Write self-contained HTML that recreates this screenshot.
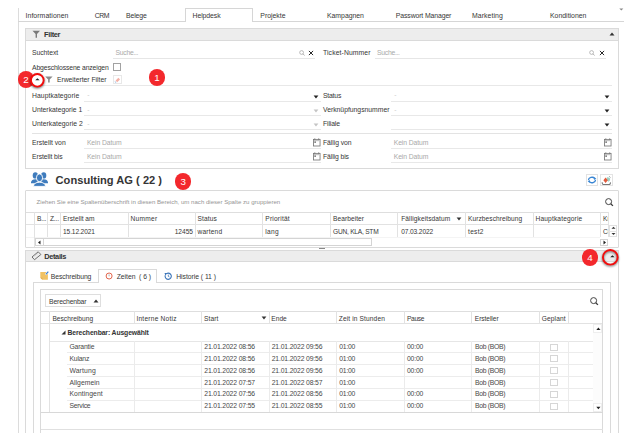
<!DOCTYPE html>
<html><head><meta charset="utf-8"><style>
html,body{margin:0;padding:0;}
body{width:642px;height:441px;position:relative;overflow:hidden;background:#fff;font-family:"Liberation Sans",sans-serif;}
body>div{position:absolute;}
.t{white-space:nowrap;}
</style></head><body>
<div style="left:18px;top:8px;width:1px;height:425px;background:#dcdcdc"></div>
<div style="left:18px;top:21px;width:606px;height:1px;background:#d6d6d6"></div>
<div style="left:185px;top:8px;width:68px;height:14px;background:#fff;border:1px solid #d6d6d6;border-bottom:none;box-sizing:border-box"></div>
<div class="t" style="left:25.5px;top:12.76px;font-size:6.9px;line-height:6.9px;color:#363636;font-weight:400;letter-spacing:0.067px;">Informationen</div>
<div class="t" style="left:94.8px;top:12.76px;font-size:6.9px;line-height:6.9px;color:#363636;font-weight:400;letter-spacing:-0.507px;">CRM</div>
<div class="t" style="left:126px;top:12.76px;font-size:6.9px;line-height:6.9px;color:#363636;font-weight:400;letter-spacing:-0.137px;">Belege</div>
<div class="t" style="left:192.5px;top:12.76px;font-size:6.9px;line-height:6.9px;color:#363636;font-weight:400;letter-spacing:-0.081px;">Helpdesk</div>
<div class="t" style="left:260.3px;top:12.76px;font-size:6.9px;line-height:6.9px;color:#363636;font-weight:400;letter-spacing:-0.016px;">Projekte</div>
<div class="t" style="left:327px;top:12.76px;font-size:6.9px;line-height:6.9px;color:#363636;font-weight:400;letter-spacing:-0.027px;">Kampagnen</div>
<div class="t" style="left:395.8px;top:12.76px;font-size:6.9px;line-height:6.9px;color:#363636;font-weight:400;letter-spacing:-0.122px;">Passwort Manager</div>
<div class="t" style="left:472px;top:12.76px;font-size:6.9px;line-height:6.9px;color:#363636;font-weight:400;letter-spacing:0.063px;">Marketing</div>
<div class="t" style="left:550px;top:12.76px;font-size:6.9px;line-height:6.9px;color:#363636;font-weight:400;letter-spacing:0.005px;">Konditionen</div>
<svg style="position:absolute;left:619px;top:7.5px;" width="5" height="3" viewBox="0 0 5 3"><path d="M0.3 0.4 L4.3 0.4 L2.3 2.4Z" fill="#888"/></svg>
<div style="left:25px;top:28px;width:594px;height:141px;border:1px solid #dadada;box-sizing:border-box;background:#fff"></div>
<div style="left:26px;top:29px;width:592px;height:11px;background:#ededed;border-bottom:1px solid #dadada"></div>
<svg style="position:absolute;left:32px;top:30px;" width="9" height="8" viewBox="0 0 9 8"><path d="M0.5 0.8 L8 0.8 L5 4 L5 7.8 L3.6 7.8 L3.6 4Z" fill="#7a7a7a"/></svg>
<div class="t" style="left:44px;top:31.15px;font-size:7.5px;line-height:7.5px;color:#333;font-weight:700;letter-spacing:-0.367px;">Filter</div>
<svg style="position:absolute;left:609px;top:32px;" width="6" height="4" viewBox="0 0 6 4"><path d="M0.5 3.5 L5.5 3.5 L3 0.5Z" fill="#333"/></svg>
<div class="t" style="left:32px;top:50.24px;font-size:6.8px;line-height:6.8px;color:#363636;font-weight:400;letter-spacing:-0.037px;">Suchtext</div>
<div style="left:113px;top:58px;width:202px;height:1px;background:#e6e6e6"></div>
<div class="t" style="left:115.5px;top:50.24px;font-size:6.8px;line-height:6.8px;color:#a9a9a9;font-weight:400;letter-spacing:-0.278px;">Suche...</div>
<svg style="position:absolute;left:298.8px;top:49.5px;" width="6" height="6" viewBox="0 0 6 6"><circle cx="2.6" cy="2.5" r="1.9" fill="none" stroke="#aaa" stroke-width="0.8"/><path d="M4 3.9 L5.7 5.6" stroke="#aaa" stroke-width="0.9"/></svg>
<svg style="position:absolute;left:308px;top:49.8px;" width="6" height="6" viewBox="0 0 6 6"><path d="M0.9 0.9 L5.1 5.1 M5.1 0.9 L0.9 5.1" stroke="#2a2a2a" stroke-width="1.0"/></svg>
<div class="t" style="left:323px;top:50.24px;font-size:6.8px;line-height:6.8px;color:#363636;font-weight:400;letter-spacing:0.107px;">Ticket-Nummer</div>
<div style="left:374.5px;top:58px;width:231.5px;height:1px;background:#e6e6e6"></div>
<div class="t" style="left:377px;top:50.24px;font-size:6.8px;line-height:6.8px;color:#a9a9a9;font-weight:400;letter-spacing:-0.278px;">Suche...</div>
<svg style="position:absolute;left:589px;top:49.5px;" width="6" height="6" viewBox="0 0 6 6"><circle cx="2.6" cy="2.5" r="1.9" fill="none" stroke="#aaa" stroke-width="0.8"/><path d="M4 3.9 L5.7 5.6" stroke="#aaa" stroke-width="0.9"/></svg>
<svg style="position:absolute;left:598.5px;top:49.8px;" width="6" height="6" viewBox="0 0 6 6"><path d="M0.9 0.9 L5.1 5.1 M5.1 0.9 L0.9 5.1" stroke="#2a2a2a" stroke-width="1.0"/></svg>
<div class="t" style="left:32px;top:64.64px;font-size:6.8px;line-height:6.8px;color:#363636;font-weight:400;letter-spacing:-0.118px;">Abgeschlossene anzeigen</div>
<div style="left:113px;top:63px;width:8px;height:8px;border:1px solid #a2a2a2;box-sizing:border-box;background:#fff"></div>
<svg style="position:absolute;left:44.5px;top:76px;" width="8" height="7" viewBox="0 0 8 7"><path d="M0.2 0.4 L7.6 0.4 L4.7 3.5 L4.7 6.6 L3.1 6.6 L3.1 3.5Z" fill="#8a8a8a"/></svg>
<div class="t" style="left:56.9px;top:77.24px;font-size:6.8px;line-height:6.8px;color:#363636;font-weight:400;letter-spacing:-0.016px;">Erweiterter Filter</div>
<div style="left:113px;top:75px;width:9px;height:9px;border:1px solid #e8e8e8;box-sizing:border-box;background:#fff"></div>
<svg style="position:absolute;left:114px;top:76px;" width="7" height="7" viewBox="0 0 7 7"><path d="M1.6 4.6 L4.4 1.8 L6 3.4 L3.2 6.2Z" fill="#f3b0a6"/><path d="M0.8 5.6 L2.2 6.6" stroke="#8ab0dc" stroke-width="0.9"/></svg>
<div style="left:26px;top:85px;width:586px;height:1px;background:#e8e8e8"></div>
<div class="t" style="left:32px;top:92.94px;font-size:6.8px;line-height:6.8px;color:#363636;font-weight:400;letter-spacing:0.083px;">Hauptkategorie</div>
<div style="left:84px;top:101px;width:237px;height:1px;background:#e8e8e8"></div>
<div class="t" style="left:87.2px;top:92.34px;font-size:6.8px;line-height:6.8px;color:#cdcdcd;font-weight:400;">-</div>
<svg style="position:absolute;left:313px;top:95px;" width="6" height="4" viewBox="0 0 6 4"><path d="M0.6 0.6 L5.4 0.6 L3 3.4Z" fill="#222"/></svg>
<div class="t" style="left:323px;top:92.94px;font-size:6.8px;line-height:6.8px;color:#363636;font-weight:400;letter-spacing:-0.196px;">Status</div>
<div style="left:391px;top:101px;width:221px;height:1px;background:#e8e8e8"></div>
<div class="t" style="left:394.3px;top:92.34px;font-size:6.8px;line-height:6.8px;color:#cdcdcd;font-weight:400;">-</div>
<svg style="position:absolute;left:604px;top:95px;" width="6" height="4" viewBox="0 0 6 4"><path d="M0.6 0.6 L5.4 0.6 L3 3.4Z" fill="#222"/></svg>
<div class="t" style="left:32px;top:107.24px;font-size:6.8px;line-height:6.8px;color:#363636;font-weight:400;letter-spacing:0.002px;">Unterkategorie 1</div>
<div style="left:84px;top:115px;width:237px;height:1px;background:#e8e8e8"></div>
<div class="t" style="left:87.2px;top:106.64px;font-size:6.8px;line-height:6.8px;color:#cdcdcd;font-weight:400;">-</div>
<svg style="position:absolute;left:313px;top:109px;" width="6" height="4" viewBox="0 0 6 4"><path d="M0.6 0.6 L5.4 0.6 L3 3.4Z" fill="#c4c4c4"/></svg>
<div class="t" style="left:323px;top:107.24px;font-size:6.8px;line-height:6.8px;color:#363636;font-weight:400;letter-spacing:-0.002px;">Verknüpfungsnummer</div>
<div style="left:391px;top:115px;width:221px;height:1px;background:#e8e8e8"></div>
<div class="t" style="left:394.3px;top:106.64px;font-size:6.8px;line-height:6.8px;color:#cdcdcd;font-weight:400;">-</div>
<svg style="position:absolute;left:604px;top:109px;" width="6" height="4" viewBox="0 0 6 4"><path d="M0.6 0.6 L5.4 0.6 L3 3.4Z" fill="#222"/></svg>
<div class="t" style="left:32px;top:121.14px;font-size:6.8px;line-height:6.8px;color:#363636;font-weight:400;letter-spacing:0.035px;">Unterkategorie 2</div>
<div style="left:84px;top:129px;width:237px;height:1px;background:#e8e8e8"></div>
<div class="t" style="left:87.2px;top:120.54px;font-size:6.8px;line-height:6.8px;color:#cdcdcd;font-weight:400;">-</div>
<svg style="position:absolute;left:313px;top:123px;" width="6" height="4" viewBox="0 0 6 4"><path d="M0.6 0.6 L5.4 0.6 L3 3.4Z" fill="#c4c4c4"/></svg>
<div class="t" style="left:323px;top:121.14px;font-size:6.8px;line-height:6.8px;color:#363636;font-weight:400;letter-spacing:-0.127px;">Filiale</div>
<div style="left:391px;top:129px;width:221px;height:1px;background:#e8e8e8"></div>
<svg style="position:absolute;left:604px;top:123px;" width="6" height="4" viewBox="0 0 6 4"><path d="M0.6 0.6 L5.4 0.6 L3 3.4Z" fill="#222"/></svg>
<div style="left:32px;top:133px;width:580px;height:1px;background:#e3e3e3"></div>
<div class="t" style="left:32px;top:140.04px;font-size:6.8px;line-height:6.8px;color:#363636;font-weight:400;letter-spacing:0.006px;">Erstellt von</div>
<div style="left:84px;top:148px;width:237px;height:1px;background:#e8e8e8"></div>
<div class="t" style="left:86.9px;top:140.04px;font-size:6.8px;line-height:6.8px;color:#a9a9a9;font-weight:400;letter-spacing:-0.092px;">Kein Datum</div>
<svg style="position:absolute;left:313px;top:138px;" width="8" height="9" viewBox="0 0 8 9"><rect x="0.45" y="1.4" width="6.6" height="6.6" fill="none" stroke="#777" stroke-width="0.85"/><rect x="0.9" y="1.9" width="5.7" height="1.3" fill="#c4c4c4"/><path d="M1.8 0.3 V2 M5.7 0.3 V2" stroke="#777" stroke-width="0.8"/><rect x="1.3" y="3.4" width="1.7" height="1.5" fill="#7a7a7a"/></svg>
<div class="t" style="left:323px;top:140.04px;font-size:6.8px;line-height:6.8px;color:#363636;font-weight:400;letter-spacing:-0.067px;">Fällig von</div>
<div style="left:391px;top:148px;width:221px;height:1px;background:#e8e8e8"></div>
<div class="t" style="left:393.7px;top:140.04px;font-size:6.8px;line-height:6.8px;color:#a9a9a9;font-weight:400;letter-spacing:-0.092px;">Kein Datum</div>
<svg style="position:absolute;left:604px;top:138px;" width="8" height="9" viewBox="0 0 8 9"><rect x="0.45" y="1.4" width="6.6" height="6.6" fill="none" stroke="#777" stroke-width="0.85"/><rect x="0.9" y="1.9" width="5.7" height="1.3" fill="#c4c4c4"/><path d="M1.8 0.3 V2 M5.7 0.3 V2" stroke="#777" stroke-width="0.8"/><rect x="1.3" y="3.4" width="1.7" height="1.5" fill="#7a7a7a"/></svg>
<div class="t" style="left:32px;top:154.14px;font-size:6.8px;line-height:6.8px;color:#363636;font-weight:400;letter-spacing:-0.069px;">Erstellt bis</div>
<div style="left:84px;top:162px;width:237px;height:1px;background:#e8e8e8"></div>
<div class="t" style="left:86.9px;top:154.14px;font-size:6.8px;line-height:6.8px;color:#a9a9a9;font-weight:400;letter-spacing:-0.092px;">Kein Datum</div>
<svg style="position:absolute;left:313px;top:152px;" width="8" height="9" viewBox="0 0 8 9"><rect x="0.45" y="1.4" width="6.6" height="6.6" fill="none" stroke="#777" stroke-width="0.85"/><rect x="0.9" y="1.9" width="5.7" height="1.3" fill="#c4c4c4"/><path d="M1.8 0.3 V2 M5.7 0.3 V2" stroke="#777" stroke-width="0.8"/><rect x="1.3" y="3.4" width="1.7" height="1.5" fill="#7a7a7a"/></svg>
<div class="t" style="left:323px;top:154.14px;font-size:6.8px;line-height:6.8px;color:#363636;font-weight:400;letter-spacing:-0.092px;">Fällig bis</div>
<div style="left:391px;top:162px;width:221px;height:1px;background:#e8e8e8"></div>
<div class="t" style="left:393.7px;top:154.14px;font-size:6.8px;line-height:6.8px;color:#a9a9a9;font-weight:400;letter-spacing:-0.092px;">Kein Datum</div>
<svg style="position:absolute;left:604px;top:152px;" width="8" height="9" viewBox="0 0 8 9"><rect x="0.45" y="1.4" width="6.6" height="6.6" fill="none" stroke="#777" stroke-width="0.85"/><rect x="0.9" y="1.9" width="5.7" height="1.3" fill="#c4c4c4"/><path d="M1.8 0.3 V2 M5.7 0.3 V2" stroke="#777" stroke-width="0.8"/><rect x="1.3" y="3.4" width="1.7" height="1.5" fill="#7a7a7a"/></svg>
<svg style="position:absolute;left:31px;top:172px;" width="17" height="15" viewBox="0 0 17 15"><g fill="#3f7cbd"><ellipse cx="4.3" cy="3.4" rx="2.6" ry="3.2"/><ellipse cx="12.7" cy="3.4" rx="2.6" ry="3.2"/><path d="M0 10.2 Q0.6 7.3 4.3 7.3 Q6.2 7.3 7.2 8.3 L6 11.2 L0 11.2Z"/><path d="M17 10.2 Q16.4 7.3 12.7 7.3 Q10.8 7.3 9.8 8.3 L11 11.2 L17 11.2Z"/><ellipse cx="8.5" cy="5.8" rx="3.1" ry="3.9" stroke="#fff" stroke-width="0.9"/><path d="M2.4 14.4 Q3 10.2 8.5 10.2 Q14 10.2 14.6 14.4Z" stroke="#fff" stroke-width="0.9"/></g></svg>
<div class="t" style="left:55.6px;top:174.90px;font-size:11.1px;line-height:11.1px;color:#353535;font-weight:700;letter-spacing:0.012px;">Consulting AG ( 22 )</div>
<div style="left:586px;top:174px;width:12px;height:12px;border:1px solid #e2e2e2;box-sizing:border-box;background:#fff"></div>
<svg style="position:absolute;left:587px;top:175px;" width="10" height="10" viewBox="0 0 10 10"><path d="M1.4 5.2 A3.6 3 0 0 1 7.8 3.4" fill="none" stroke="#3a86d4" stroke-width="1.3"/><path d="M8.6 4.8 A3.6 3 0 0 1 2.2 6.6" fill="none" stroke="#3a86d4" stroke-width="1.3"/><path d="M6.4 2.2 L9.4 3.2 L7.2 5Z" fill="#3a86d4"/><path d="M3.6 7.8 L0.6 6.8 L2.8 5Z" fill="#3a86d4"/></svg>
<div style="left:600px;top:174px;width:13px;height:12px;border:1px solid #e4e4e4;box-sizing:border-box;background:#fff"></div>
<svg style="position:absolute;left:601px;top:175px;" width="11" height="10" viewBox="0 0 11 10"><path d="M5.8 2.2 Q8.6 1.8 9.2 3.8 Q9.4 6 7.6 6.8 L5.8 5.5Z" fill="#9fd0c4"/><path d="M8.2 1.2 L9.4 2.6" stroke="#888" stroke-width="0.8"/><path d="M4.6 2.6 L6.8 5.3 L4.6 8 L2.4 5.3Z" fill="#e25a3c"/><path d="M1.2 7.2 Q1 9.6 3 9.6 L8.2 9.6 Q9.6 9.4 9.4 7.4" fill="none" stroke="#777" stroke-width="1.1"/></svg>
<div style="left:25px;top:190px;width:594px;height:58px;border:1px solid #dadada;box-sizing:border-box;background:#fff;border-radius:1px"></div>
<div class="t" style="left:36.6px;top:199.14px;font-size:6.1px;line-height:6.1px;color:#959595;font-weight:400;letter-spacing:-0.011px;">Ziehen Sie eine Spaltenüberschrift in diesen Bereich, um nach dieser Spalte zu gruppieren</div>
<svg style="position:absolute;left:605px;top:198px;" width="9" height="9" viewBox="0 0 9 9"><circle cx="3.6" cy="3.6" r="3.0" fill="none" stroke="#3a3a3a" stroke-width="0.95"/><path d="M5.8 5.8 L7.9 7.9" stroke="#3a3a3a" stroke-width="1.3"/></svg>
<div style="left:26px;top:212px;width:583px;height:1px;background:#dedede"></div>
<div style="left:26px;top:224px;width:583px;height:1px;background:#e2e2e2"></div>
<div style="left:34px;top:212px;width:1px;height:25px;background:#e2e2e2"></div>
<div style="left:47px;top:212px;width:1px;height:25px;background:#e2e2e2"></div>
<div style="left:60px;top:212px;width:1px;height:25px;background:#e2e2e2"></div>
<div style="left:128px;top:212px;width:1px;height:25px;background:#e2e2e2"></div>
<div style="left:195px;top:212px;width:1px;height:25px;background:#e2e2e2"></div>
<div style="left:262px;top:212px;width:1px;height:25px;background:#e2e2e2"></div>
<div style="left:330px;top:212px;width:1px;height:25px;background:#e2e2e2"></div>
<div style="left:397px;top:212px;width:1px;height:25px;background:#e2e2e2"></div>
<div style="left:465px;top:212px;width:1px;height:25px;background:#e2e2e2"></div>
<div style="left:533px;top:212px;width:1px;height:25px;background:#e2e2e2"></div>
<div style="left:600px;top:212px;width:1px;height:25px;background:#e2e2e2"></div>
<div style="left:608px;top:212px;width:1px;height:25px;background:#e2e2e2"></div>
<div style="left:26px;top:237px;width:574px;height:1px;background:#f4f4f4"></div>
<div style="left:34px;top:237px;width:1px;height:10px;background:#e2e2e2"></div>
<div class="t" style="left:37.1px;top:216.11px;font-size:6.6px;line-height:6.6px;color:#363636;font-weight:400;letter-spacing:-0.201px;">B...</div>
<div class="t" style="left:49.9px;top:216.11px;font-size:6.6px;line-height:6.6px;color:#363636;font-weight:400;letter-spacing:-0.111px;">Z...</div>
<div class="t" style="left:63.1px;top:216.11px;font-size:6.6px;line-height:6.6px;color:#363636;font-weight:400;letter-spacing:0.033px;">Erstellt am</div>
<div class="t" style="left:130.6px;top:216.11px;font-size:6.6px;line-height:6.6px;color:#363636;font-weight:400;letter-spacing:0.240px;">Nummer</div>
<div class="t" style="left:197.6px;top:216.11px;font-size:6.6px;line-height:6.6px;color:#363636;font-weight:400;letter-spacing:0.098px;">Status</div>
<div class="t" style="left:265.3px;top:216.11px;font-size:6.6px;line-height:6.6px;color:#363636;font-weight:400;letter-spacing:0.208px;">Priorität</div>
<div class="t" style="left:333px;top:216.11px;font-size:6.6px;line-height:6.6px;color:#363636;font-weight:400;letter-spacing:0.061px;">Bearbeiter</div>
<div class="t" style="left:401.2px;top:216.11px;font-size:6.6px;line-height:6.6px;color:#363636;font-weight:400;letter-spacing:0.094px;">Fälligkeitsdatum</div>
<div class="t" style="left:468px;top:216.11px;font-size:6.6px;line-height:6.6px;color:#363636;font-weight:400;letter-spacing:0.073px;">Kurzbeschreibung</div>
<div class="t" style="left:535.5px;top:216.11px;font-size:6.6px;line-height:6.6px;color:#363636;font-weight:400;letter-spacing:0.157px;">Hauptkategorie</div>
<svg style="position:absolute;left:456.2px;top:217.2px;" width="6" height="4" viewBox="0 0 6 4"><path d="M0.6 0.6 L5.4 0.6 L3 3.4Z" fill="#333"/></svg>
<div class="t" style="left:63.1px;top:228.81px;font-size:6.6px;line-height:6.6px;color:#363636;font-weight:400;letter-spacing:-0.137px;">15.12.2021</div>
<div class="t" style="left:-107px;width:300px;text-align:right;top:228.81px;font-size:6.6px;line-height:6.6px;color:#363636;font-weight:400;letter-spacing:-0.013px;margin-right:0.013px;">12455</div>
<div class="t" style="left:197.6px;top:228.81px;font-size:6.6px;line-height:6.6px;color:#363636;font-weight:400;letter-spacing:0.170px;">wartend</div>
<div class="t" style="left:265.3px;top:228.81px;font-size:6.6px;line-height:6.6px;color:#363636;font-weight:400;letter-spacing:0.341px;">lang</div>
<div class="t" style="left:333px;top:228.81px;font-size:6.6px;line-height:6.6px;color:#363636;font-weight:400;letter-spacing:-0.226px;">GUN, KLA, STM</div>
<div class="t" style="left:401.2px;top:228.81px;font-size:6.6px;line-height:6.6px;color:#363636;font-weight:400;letter-spacing:-0.115px;">07.03.2022</div>
<div class="t" style="left:468px;top:228.81px;font-size:6.6px;line-height:6.6px;color:#363636;font-weight:400;letter-spacing:0.298px;">test2</div>
<div style="left:601px;top:212px;width:7px;height:25px;overflow:hidden"><div class="t" style="position:absolute;left:2px;top:4.1px;font-size:6.6px;line-height:6.6px;color:#363636">Kunde</div><div class="t" style="position:absolute;left:2px;top:16.8px;font-size:6.6px;line-height:6.6px;color:#363636">Consulting</div></div>
<div style="left:609px;top:225px;width:9px;height:12px;background:#fff"></div>
<div style="left:609px;top:225px;width:8px;height:11.5px;border:1px solid #e0e0e0;box-sizing:border-box;background:#fff"></div>
<div style="left:609px;top:230.5px;width:8px;height:1px;background:#e4e4e4"></div>
<svg style="position:absolute;left:610.5px;top:226.3px;" width="5" height="4" viewBox="0 0 5 4"><path d="M0.5 2.8 L4.5 2.8 L2.5 0.7Z" fill="#333"/></svg>
<svg style="position:absolute;left:610.5px;top:231.8px;" width="5" height="4" viewBox="0 0 5 4"><path d="M0.5 0.9 L4.5 0.9 L2.5 3Z" fill="#333"/></svg>
<div style="left:35px;top:238px;width:565px;height:8px;background:#fff"></div>
<div style="left:35px;top:238px;width:9px;height:8px;border:1px solid #d4d4d4;box-sizing:border-box;background:#fff"></div>
<svg style="position:absolute;left:37px;top:240px;" width="5" height="5" viewBox="0 0 5 5"><path d="M3.5 0.5 L3.5 4.5 L1 2.5Z" fill="#222"/></svg>
<div style="left:43px;top:238px;width:329px;height:8px;border:1px solid #d4d4d4;box-sizing:border-box;background:#fff"></div>
<div style="left:600px;top:239px;width:8px;height:7px;border:1px solid #d4d4d4;box-sizing:border-box;background:#fff"></div>
<svg style="position:absolute;left:602px;top:240px;" width="5" height="5" viewBox="0 0 5 5"><path d="M1.5 0.5 L1.5 4.5 L4 2.5Z" fill="#222"/></svg>
<div style="left:318.7px;top:248px;width:6.800000000000011px;height:1px;background:#888"></div>
<div style="left:25px;top:250px;width:1px;height:183px;background:#dadada"></div>
<div style="left:618px;top:250px;width:1px;height:183px;background:#dadada"></div>
<div style="left:25px;top:250px;width:594px;height:12px;background:#ededed;border:1px solid #dadada;box-sizing:border-box"></div>
<svg style="position:absolute;left:31px;top:251px;" width="11" height="10" viewBox="0 0 11 10"><path d="M7.2 0.8 L9.9 3.5 L3.5 8.7 L1.0 6.0Z" fill="none" stroke="#666" stroke-width="0.95" stroke-linejoin="round"/><path d="M6.6 2.6 L3.2 5.5" stroke="#aaa" stroke-width="0.6" stroke-dasharray="0.8 0.6"/></svg>
<div class="t" style="left:44.2px;top:252.54px;font-size:7.4px;line-height:7.4px;color:#333;font-weight:700;letter-spacing:-0.328px;">Details</div>
<div style="left:33px;top:282px;width:1px;height:151px;background:#dadada"></div>
<div style="left:610px;top:282px;width:1px;height:151px;background:#dadada"></div>
<div style="left:33px;top:282px;width:578px;height:1px;background:#dadada"></div>
<div style="left:98px;top:269px;width:59px;height:14px;background:#fff;border:1px solid #dadada;border-bottom:none;box-sizing:border-box"></div>
<svg style="position:absolute;left:40px;top:271px;" width="9" height="9" viewBox="0 0 9 9"><path d="M0.3 0.9 H7.9 V8.8 H2.4 L0.3 6.7Z" fill="#f0c266"/><path d="M0.3 6.7 L2.4 6.7 L2.4 8.8Z" fill="#dca850"/><path d="M5.6 3.6 L8.4 0.6" stroke="#fff" stroke-width="2"/><path d="M5.9 3.3 L8.3 0.7" stroke="#3b7fd0" stroke-width="1.2"/></svg>
<div class="t" style="left:50.8px;top:273.84px;font-size:6.8px;line-height:6.8px;color:#363636;font-weight:400;letter-spacing:-0.089px;">Beschreibung</div>
<svg style="position:absolute;left:105px;top:272px;" width="8" height="8" viewBox="0 0 8 8"><circle cx="4.1" cy="4" r="3.0" fill="none" stroke="#e2654c" stroke-width="1.0"/><path d="M4.1 2.4 V4.3" fill="none" stroke="#9a9a9a" stroke-width="0.8"/></svg>
<div class="t" style="left:116.75px;top:273.84px;font-size:6.8px;line-height:6.8px;color:#363636;font-weight:400;letter-spacing:-0.043px;">Zeiten  ( 6 )</div>
<svg style="position:absolute;left:164px;top:271.8px;" width="9" height="9" viewBox="0 0 9 9"><path d="M1.3 3.2 A3.1 3.1 0 1 0 2.6 1.6" fill="none" stroke="#3a74b8" stroke-width="1.1"/><path d="M0.5 1.0 L3.4 1.0 L1.4 3.6Z" fill="#3a74b8"/><path d="M4.3 2.6 V4.4 L5.5 5.0" fill="none" stroke="#3a74b8" stroke-width="0.8"/></svg>
<div class="t" style="left:176.25px;top:273.84px;font-size:6.8px;line-height:6.8px;color:#363636;font-weight:400;letter-spacing:-0.040px;">Historie ( 11 )</div>
<div style="left:40px;top:289px;width:563px;height:144px;border:1px solid #dadada;border-bottom:none;box-sizing:border-box;background:#fff"></div>
<div style="left:45px;top:294px;width:56px;height:13px;border:1px solid #dedede;box-sizing:border-box;background:#fff"></div>
<div class="t" style="left:49px;top:298.84px;font-size:6.8px;line-height:6.8px;color:#363636;font-weight:400;letter-spacing:-0.144px;">Berechenbar</div>
<svg style="position:absolute;left:93px;top:298.5px;" width="6" height="4" viewBox="0 0 6 4"><path d="M0.5 3.5 L5.5 3.5 L3 0.5Z" fill="#333"/></svg>
<svg style="position:absolute;left:590px;top:296.5px;" width="9" height="9" viewBox="0 0 9 9"><circle cx="3.6" cy="3.6" r="3.0" fill="none" stroke="#3a3a3a" stroke-width="0.95"/><path d="M5.8 5.8 L7.9 7.9" stroke="#3a3a3a" stroke-width="1.3"/></svg>
<div style="left:41px;top:311px;width:561px;height:1px;background:#dedede"></div>
<div style="left:41px;top:323px;width:561px;height:1px;background:#e2e2e2"></div>
<div style="left:49px;top:311px;width:1px;height:12px;background:#e2e2e2"></div>
<div style="left:134px;top:311px;width:1px;height:12px;background:#e2e2e2"></div>
<div style="left:201px;top:311px;width:1px;height:12px;background:#e2e2e2"></div>
<div style="left:269px;top:311px;width:1px;height:12px;background:#e2e2e2"></div>
<div style="left:336px;top:311px;width:1px;height:12px;background:#e2e2e2"></div>
<div style="left:404px;top:311px;width:1px;height:12px;background:#e2e2e2"></div>
<div style="left:471px;top:311px;width:1px;height:12px;background:#e2e2e2"></div>
<div style="left:539px;top:311px;width:1px;height:12px;background:#e2e2e2"></div>
<div style="left:568px;top:311px;width:1px;height:12px;background:#e2e2e2"></div>
<div style="left:49px;top:323px;width:1px;height:89px;background:#e2e2e2"></div>
<div class="t" style="left:52.4px;top:316.01px;font-size:6.6px;line-height:6.6px;color:#363636;font-weight:400;letter-spacing:0.040px;">Beschreibung</div>
<div class="t" style="left:136.4px;top:316.01px;font-size:6.6px;line-height:6.6px;color:#363636;font-weight:400;letter-spacing:0.232px;">Interne Notiz</div>
<div class="t" style="left:204.1px;top:316.01px;font-size:6.6px;line-height:6.6px;color:#363636;font-weight:400;letter-spacing:0.065px;">Start</div>
<div class="t" style="left:271.3px;top:316.01px;font-size:6.6px;line-height:6.6px;color:#363636;font-weight:400;letter-spacing:0.029px;">Ende</div>
<div class="t" style="left:338.8px;top:316.01px;font-size:6.6px;line-height:6.6px;color:#363636;font-weight:400;letter-spacing:0.122px;">Zeit in Stunden</div>
<div class="t" style="left:406.9px;top:316.01px;font-size:6.6px;line-height:6.6px;color:#363636;font-weight:400;letter-spacing:-0.279px;">Pause</div>
<div class="t" style="left:474.8px;top:316.01px;font-size:6.6px;line-height:6.6px;color:#363636;font-weight:400;letter-spacing:-0.051px;">Ersteller</div>
<div class="t" style="left:541.7px;top:316.01px;font-size:6.6px;line-height:6.6px;color:#363636;font-weight:400;letter-spacing:0.131px;">Geplant</div>
<svg style="position:absolute;left:260.5px;top:315.5px;" width="6" height="4" viewBox="0 0 6 4"><path d="M0.6 0.6 L5.4 0.6 L3 3.4Z" fill="#333"/></svg>
<svg style="position:absolute;left:60.5px;top:330px;" width="5" height="5" viewBox="0 0 5 5"><path d="M4.5 0.5 L4.5 4.5 L0.5 4.5Z" fill="#333"/></svg>
<div class="t" style="left:67.5px;top:330.44px;font-size:6.8px;line-height:6.8px;color:#333;font-weight:700;letter-spacing:-0.106px;">Berechenbar: Ausgewählt</div>
<div style="left:50px;top:341px;width:543px;height:1px;background:#e6e6e6"></div>
<div class="t" style="left:69.4px;top:344.44px;font-size:6.8px;line-height:6.8px;color:#474747;font-weight:400;letter-spacing:-0.140px;">Garantie</div>
<div class="t" style="left:204.3px;top:344.44px;font-size:6.8px;line-height:6.8px;color:#474747;font-weight:400;letter-spacing:-0.143px;">21.01.2022 08:56</div>
<div class="t" style="left:271.7px;top:344.44px;font-size:6.8px;line-height:6.8px;color:#474747;font-weight:400;letter-spacing:-0.143px;">21.01.2022 09:56</div>
<div class="t" style="left:339.3px;top:344.44px;font-size:6.8px;line-height:6.8px;color:#474747;font-weight:400;letter-spacing:-0.229px;">01:00</div>
<div class="t" style="left:407px;top:344.44px;font-size:6.8px;line-height:6.8px;color:#474747;font-weight:400;letter-spacing:-0.179px;">00:00</div>
<div class="t" style="left:474.9px;top:344.44px;font-size:6.8px;line-height:6.8px;color:#474747;font-weight:400;letter-spacing:-0.285px;">Bob (BOB)</div>
<div style="left:549.6px;top:343.6px;width:8px;height:7.5px;border:1px solid #d6d6d6;box-sizing:border-box"></div>
<div style="left:134px;top:341px;width:1px;height:11px;background:#ebebeb"></div>
<div style="left:201px;top:341px;width:1px;height:11px;background:#ebebeb"></div>
<div style="left:269px;top:341px;width:1px;height:11px;background:#ebebeb"></div>
<div style="left:336px;top:341px;width:1px;height:11px;background:#ebebeb"></div>
<div style="left:404px;top:341px;width:1px;height:11px;background:#ebebeb"></div>
<div style="left:471px;top:341px;width:1px;height:11px;background:#ebebeb"></div>
<div style="left:539px;top:341px;width:1px;height:11px;background:#ebebeb"></div>
<div style="left:568px;top:341px;width:1px;height:11px;background:#ebebeb"></div>
<div style="left:67px;top:352px;width:526px;height:1px;background:#ececec"></div>
<div class="t" style="left:69.4px;top:356.20px;font-size:6.8px;line-height:6.8px;color:#474747;font-weight:400;letter-spacing:-0.158px;">Kulanz</div>
<div class="t" style="left:204.3px;top:356.20px;font-size:6.8px;line-height:6.8px;color:#474747;font-weight:400;letter-spacing:-0.143px;">21.01.2022 08:56</div>
<div class="t" style="left:271.7px;top:356.20px;font-size:6.8px;line-height:6.8px;color:#474747;font-weight:400;letter-spacing:-0.143px;">21.01.2022 09:56</div>
<div class="t" style="left:339.3px;top:356.20px;font-size:6.8px;line-height:6.8px;color:#474747;font-weight:400;letter-spacing:-0.229px;">01:00</div>
<div class="t" style="left:407px;top:356.20px;font-size:6.8px;line-height:6.8px;color:#474747;font-weight:400;letter-spacing:-0.179px;">00:00</div>
<div class="t" style="left:474.9px;top:356.20px;font-size:6.8px;line-height:6.8px;color:#474747;font-weight:400;letter-spacing:-0.285px;">Bob (BOB)</div>
<div style="left:549.6px;top:354.6px;width:8px;height:7.5px;border:1px solid #d6d6d6;box-sizing:border-box"></div>
<div style="left:134px;top:352px;width:1px;height:12px;background:#ebebeb"></div>
<div style="left:201px;top:352px;width:1px;height:12px;background:#ebebeb"></div>
<div style="left:269px;top:352px;width:1px;height:12px;background:#ebebeb"></div>
<div style="left:336px;top:352px;width:1px;height:12px;background:#ebebeb"></div>
<div style="left:404px;top:352px;width:1px;height:12px;background:#ebebeb"></div>
<div style="left:471px;top:352px;width:1px;height:12px;background:#ebebeb"></div>
<div style="left:539px;top:352px;width:1px;height:12px;background:#ebebeb"></div>
<div style="left:568px;top:352px;width:1px;height:12px;background:#ebebeb"></div>
<div style="left:67px;top:364px;width:526px;height:1px;background:#ececec"></div>
<div class="t" style="left:69.4px;top:367.96px;font-size:6.8px;line-height:6.8px;color:#474747;font-weight:400;letter-spacing:0.142px;">Wartung</div>
<div class="t" style="left:204.3px;top:367.96px;font-size:6.8px;line-height:6.8px;color:#474747;font-weight:400;letter-spacing:-0.143px;">21.01.2022 08:56</div>
<div class="t" style="left:271.7px;top:367.96px;font-size:6.8px;line-height:6.8px;color:#474747;font-weight:400;letter-spacing:-0.143px;">21.01.2022 09:56</div>
<div class="t" style="left:339.3px;top:367.96px;font-size:6.8px;line-height:6.8px;color:#474747;font-weight:400;letter-spacing:-0.229px;">01:00</div>
<div class="t" style="left:407px;top:367.96px;font-size:6.8px;line-height:6.8px;color:#474747;font-weight:400;letter-spacing:-0.179px;">00:00</div>
<div class="t" style="left:474.9px;top:367.96px;font-size:6.8px;line-height:6.8px;color:#474747;font-weight:400;letter-spacing:-0.285px;">Bob (BOB)</div>
<div style="left:549.6px;top:366.6px;width:8px;height:7.5px;border:1px solid #d6d6d6;box-sizing:border-box"></div>
<div style="left:134px;top:364px;width:1px;height:12px;background:#ebebeb"></div>
<div style="left:201px;top:364px;width:1px;height:12px;background:#ebebeb"></div>
<div style="left:269px;top:364px;width:1px;height:12px;background:#ebebeb"></div>
<div style="left:336px;top:364px;width:1px;height:12px;background:#ebebeb"></div>
<div style="left:404px;top:364px;width:1px;height:12px;background:#ebebeb"></div>
<div style="left:471px;top:364px;width:1px;height:12px;background:#ebebeb"></div>
<div style="left:539px;top:364px;width:1px;height:12px;background:#ebebeb"></div>
<div style="left:568px;top:364px;width:1px;height:12px;background:#ebebeb"></div>
<div style="left:67px;top:376px;width:526px;height:1px;background:#ececec"></div>
<div class="t" style="left:69.4px;top:379.72px;font-size:6.8px;line-height:6.8px;color:#474747;font-weight:400;letter-spacing:0.043px;">Allgemein</div>
<div class="t" style="left:204.3px;top:379.72px;font-size:6.8px;line-height:6.8px;color:#474747;font-weight:400;letter-spacing:-0.143px;">21.01.2022 07:57</div>
<div class="t" style="left:271.7px;top:379.72px;font-size:6.8px;line-height:6.8px;color:#474747;font-weight:400;letter-spacing:-0.143px;">21.01.2022 08:57</div>
<div class="t" style="left:339.3px;top:379.72px;font-size:6.8px;line-height:6.8px;color:#474747;font-weight:400;letter-spacing:-0.229px;">01:00</div>
<div class="t" style="left:474.9px;top:379.72px;font-size:6.8px;line-height:6.8px;color:#474747;font-weight:400;letter-spacing:-0.285px;">Bob (BOB)</div>
<div style="left:549.6px;top:378.6px;width:8px;height:7.5px;border:1px solid #d6d6d6;box-sizing:border-box"></div>
<div style="left:134px;top:376px;width:1px;height:12px;background:#ebebeb"></div>
<div style="left:201px;top:376px;width:1px;height:12px;background:#ebebeb"></div>
<div style="left:269px;top:376px;width:1px;height:12px;background:#ebebeb"></div>
<div style="left:336px;top:376px;width:1px;height:12px;background:#ebebeb"></div>
<div style="left:404px;top:376px;width:1px;height:12px;background:#ebebeb"></div>
<div style="left:471px;top:376px;width:1px;height:12px;background:#ebebeb"></div>
<div style="left:539px;top:376px;width:1px;height:12px;background:#ebebeb"></div>
<div style="left:568px;top:376px;width:1px;height:12px;background:#ebebeb"></div>
<div style="left:67px;top:388px;width:526px;height:1px;background:#ececec"></div>
<div class="t" style="left:69.4px;top:391.48px;font-size:6.8px;line-height:6.8px;color:#474747;font-weight:400;letter-spacing:0.087px;">Kontingent</div>
<div class="t" style="left:204.3px;top:391.48px;font-size:6.8px;line-height:6.8px;color:#474747;font-weight:400;letter-spacing:-0.143px;">21.01.2022 07:56</div>
<div class="t" style="left:271.7px;top:391.48px;font-size:6.8px;line-height:6.8px;color:#474747;font-weight:400;letter-spacing:-0.143px;">21.01.2022 08:56</div>
<div class="t" style="left:339.3px;top:391.48px;font-size:6.8px;line-height:6.8px;color:#474747;font-weight:400;letter-spacing:-0.229px;">01:00</div>
<div class="t" style="left:407px;top:391.48px;font-size:6.8px;line-height:6.8px;color:#474747;font-weight:400;letter-spacing:-0.179px;">00:00</div>
<div class="t" style="left:474.9px;top:391.48px;font-size:6.8px;line-height:6.8px;color:#474747;font-weight:400;letter-spacing:-0.285px;">Bob (BOB)</div>
<div style="left:549.6px;top:390.6px;width:8px;height:7.5px;border:1px solid #d6d6d6;box-sizing:border-box"></div>
<div style="left:134px;top:388px;width:1px;height:12px;background:#ebebeb"></div>
<div style="left:201px;top:388px;width:1px;height:12px;background:#ebebeb"></div>
<div style="left:269px;top:388px;width:1px;height:12px;background:#ebebeb"></div>
<div style="left:336px;top:388px;width:1px;height:12px;background:#ebebeb"></div>
<div style="left:404px;top:388px;width:1px;height:12px;background:#ebebeb"></div>
<div style="left:471px;top:388px;width:1px;height:12px;background:#ebebeb"></div>
<div style="left:539px;top:388px;width:1px;height:12px;background:#ebebeb"></div>
<div style="left:568px;top:388px;width:1px;height:12px;background:#ebebeb"></div>
<div style="left:67px;top:400px;width:526px;height:1px;background:#ececec"></div>
<div class="t" style="left:69.4px;top:403.24px;font-size:6.8px;line-height:6.8px;color:#474747;font-weight:400;letter-spacing:-0.246px;">Service</div>
<div class="t" style="left:204.3px;top:403.24px;font-size:6.8px;line-height:6.8px;color:#474747;font-weight:400;letter-spacing:-0.143px;">21.01.2022 07:55</div>
<div class="t" style="left:271.7px;top:403.24px;font-size:6.8px;line-height:6.8px;color:#474747;font-weight:400;letter-spacing:-0.143px;">21.01.2022 08:55</div>
<div class="t" style="left:339.3px;top:403.24px;font-size:6.8px;line-height:6.8px;color:#474747;font-weight:400;letter-spacing:-0.229px;">01:00</div>
<div class="t" style="left:407px;top:403.24px;font-size:6.8px;line-height:6.8px;color:#474747;font-weight:400;letter-spacing:-0.179px;">00:00</div>
<div class="t" style="left:474.9px;top:403.24px;font-size:6.8px;line-height:6.8px;color:#474747;font-weight:400;letter-spacing:-0.285px;">Bob (BOB)</div>
<div style="left:549.6px;top:402.6px;width:8px;height:7.5px;border:1px solid #d6d6d6;box-sizing:border-box"></div>
<div style="left:134px;top:400px;width:1px;height:12px;background:#ebebeb"></div>
<div style="left:201px;top:400px;width:1px;height:12px;background:#ebebeb"></div>
<div style="left:269px;top:400px;width:1px;height:12px;background:#ebebeb"></div>
<div style="left:336px;top:400px;width:1px;height:12px;background:#ebebeb"></div>
<div style="left:404px;top:400px;width:1px;height:12px;background:#ebebeb"></div>
<div style="left:471px;top:400px;width:1px;height:12px;background:#ebebeb"></div>
<div style="left:539px;top:400px;width:1px;height:12px;background:#ebebeb"></div>
<div style="left:568px;top:400px;width:1px;height:12px;background:#ebebeb"></div>
<div style="left:41px;top:412px;width:562px;height:1px;background:#d8d8d8"></div>
<div style="left:41px;top:429px;width:562px;height:1px;background:#e0e0e0"></div>
<div style="left:593px;top:324px;width:9px;height:88px;background:#fcfcfc"></div>
<div style="left:593px;top:324px;width:9px;height:9px;border:1px solid #eeeeee;box-sizing:border-box;background:#fff"></div>
<div style="left:593px;top:403px;width:9px;height:9px;border:1px solid #eeeeee;box-sizing:border-box;background:#fff"></div>
<svg style="position:absolute;left:595.5px;top:327px;" width="5" height="4" viewBox="0 0 5 4"><path d="M0.3 3 L4.5 3 L2.4 0.5Z" fill="#222"/></svg>
<svg style="position:absolute;left:595.5px;top:406px;" width="5" height="4" viewBox="0 0 5 4"><path d="M0.3 0.8 L4.5 0.8 L2.4 3.3Z" fill="#222"/></svg>
<div style="left:148.7px;top:69.0px;width:16.8px;height:16.8px;background:#f3282c;border-radius:50%"></div>
<div class="t" style="left:127.1px;top:73.25px;font-size:9.8px;line-height:9.8px;color:#fff;font-weight:400;width:60px;text-align:center">1</div>
<div style="left:17.5px;top:71.19999999999999px;width:16.8px;height:16.8px;background:#f3282c;border-radius:50%"></div>
<div class="t" style="left:-4.100000000000001px;top:75.45px;font-size:9.8px;line-height:9.8px;color:#fff;font-weight:400;width:60px;text-align:center">2</div>
<svg style="position:absolute;left:27.45px;top:69.60000000000001px;filter:drop-shadow(0.8px 1.6px 1.2px rgba(0,0,0,0.55))" width="20.6" height="20.6" viewBox="0 0 20.6 20.6"><circle cx="10.3" cy="10.3" r="6.35" fill="#fff" stroke="#f20d0d" stroke-width="1.9"/></svg>
<svg style="position:absolute;left:35px;top:77.8px;" width="5" height="3" viewBox="0 0 5 3"><path d="M0.2 2.2 L4.6 2.2 L2.4 0.2Z" fill="#222"/></svg>
<div style="left:174.89999999999998px;top:173.1px;width:16.6px;height:16.6px;background:#f3282c;border-radius:50%"></div>
<div class="t" style="left:153.2px;top:177.25px;font-size:9.8px;line-height:9.8px;color:#fff;font-weight:400;width:60px;text-align:center">3</div>
<div style="left:581.7px;top:249.09999999999997px;width:16.6px;height:16.6px;background:#f3282c;border-radius:50%"></div>
<div class="t" style="left:560px;top:253.25px;font-size:9.8px;line-height:9.8px;color:#fff;font-weight:400;width:60px;text-align:center">4</div>
<svg style="position:absolute;left:599.2px;top:246.2px;filter:drop-shadow(0.8px 1.6px 1.2px rgba(0,0,0,0.55))" width="22.6" height="22.6" viewBox="0 0 22.6 22.6"><circle cx="11.3" cy="11.3" r="7.3500000000000005" fill="none" stroke="#f20d0d" stroke-width="1.9"/></svg>
<svg style="position:absolute;left:609.8px;top:254.9px;" width="5" height="3" viewBox="0 0 5 3"><path d="M0.2 2.2 L4.6 2.2 L2.4 0.2Z" fill="#222"/></svg>
</body></html>
